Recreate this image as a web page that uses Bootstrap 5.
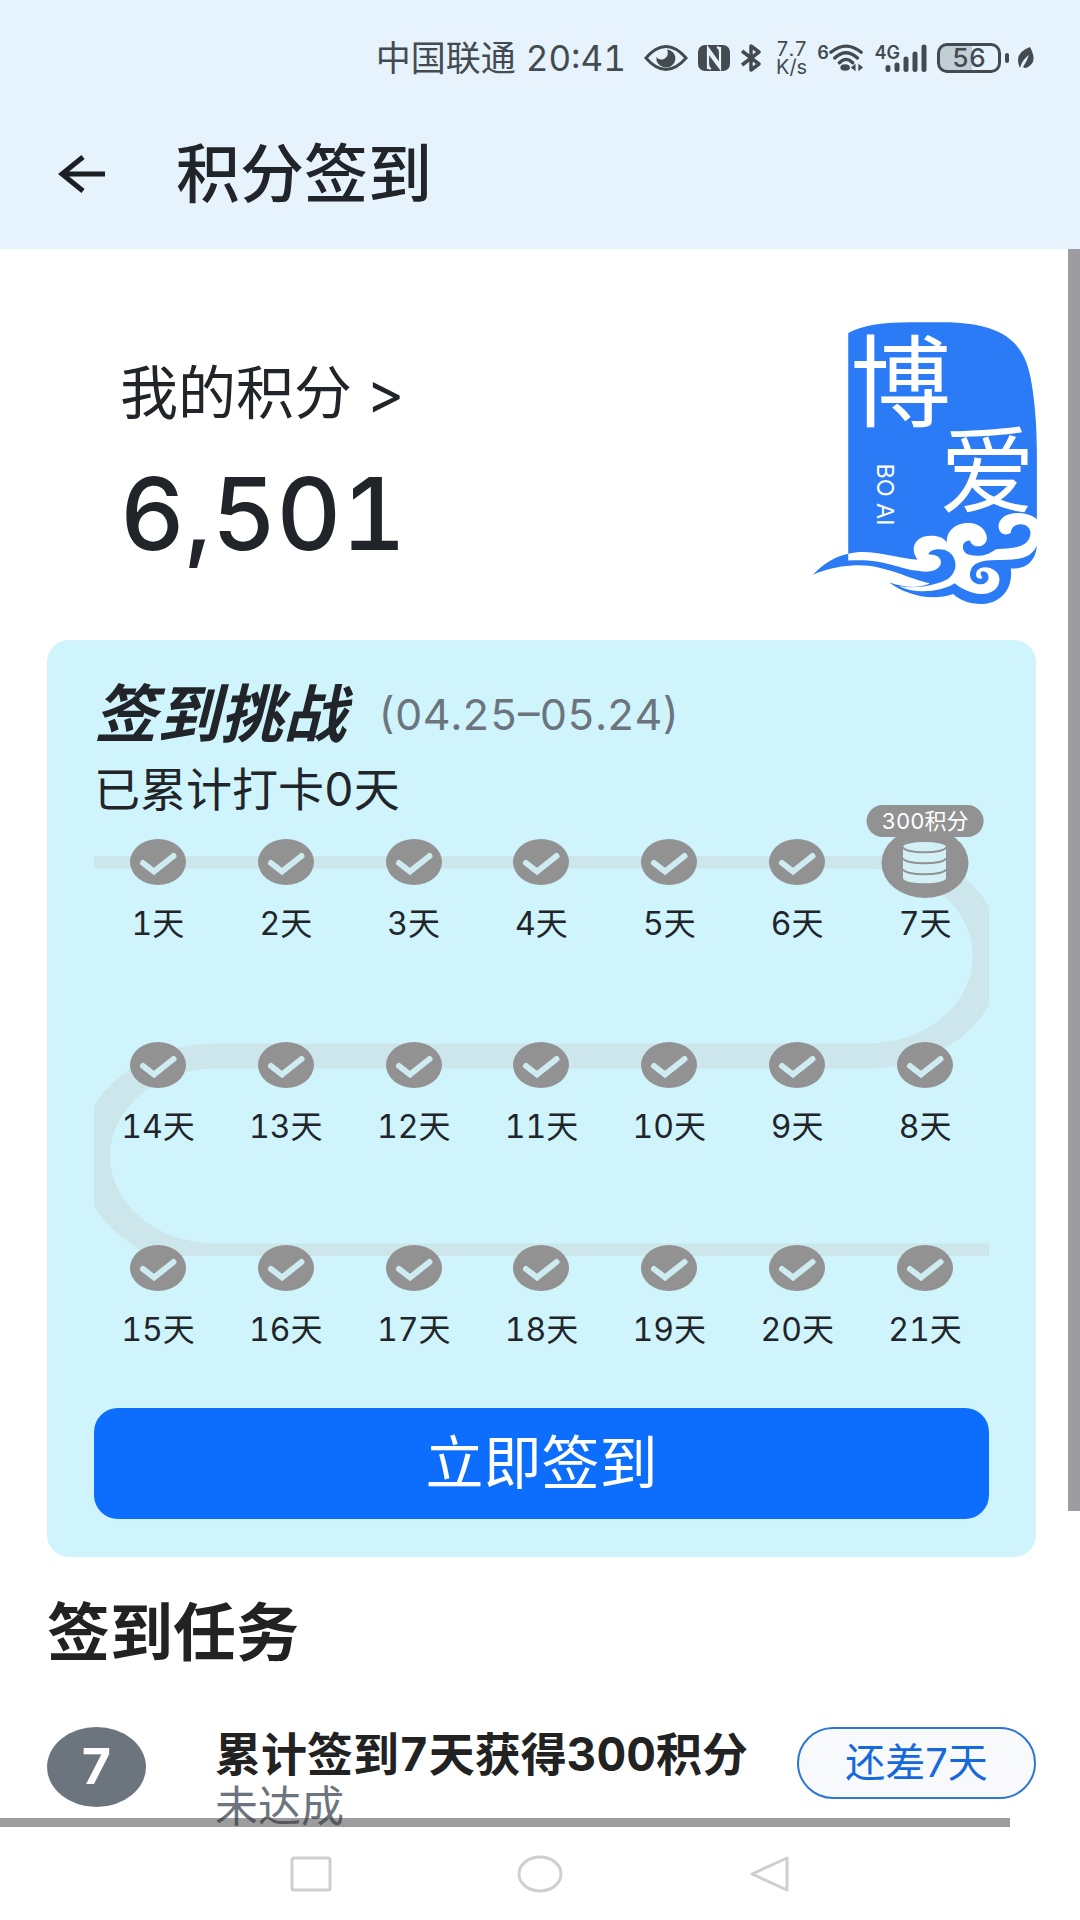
<!DOCTYPE html>
<html lang="zh-CN">
<head>
<meta charset="utf-8">
<meta name="viewport" content="width=device-width, initial-scale=1">
<title>积分签到</title>
<link href="https://cdn.jsdelivr.net/npm/bootstrap@5.3.0/dist/css/bootstrap.min.css" rel="stylesheet">
<style>
  body { font-family: Inter, "Noto Sans CJK SC", sans-serif; font-variant-numeric: tabular-nums; color: #212529; background: #fff; }
  .screen { height: 100vh; }
  .app-head { background: #e6f3fc; height: 249px; padding-top: 34px; }
  .status { color: #434b50; height: 48px; padding-right: 45px; gap: 10px; font-size: 35px; line-height: 48px; }
  .status svg, .title-bar svg, .sys-nav svg, .seal, .day svg { display: block; flex: none; }
  .net-rate { font-size: 20px; line-height: 24px; }
  .net-rate span { display: block; height: 18px; line-height: 18px; }
  .tiny-mark { font-size: 18px; line-height: 20px; font-weight: 600; align-self: flex-start; }
  .signal-bars { margin-left: -15px; }
  .power { width: 64px; height: 30px; border: 3px solid #434b50; border-radius: 10px; font-size: 26px; line-height: 24px; font-weight: 500; background: linear-gradient(90deg, #c2ced5 56%, transparent 56%); }
  .title-bar { height: 100px; margin-top: 42px; padding-left: 58px; gap: 70px; }
  .title-bar h1 { font-size: 64px; line-height: 100px; font-weight: 500; margin: 0; }
  .view { min-height: 0; }
  .scroller { height: 100%; overflow: hidden; padding: 71px 44px 0 47px; }
  .bar-v { position: absolute; right: 0; top: 0; width: 12px; height: 80%; background: #9d9ca0; }
  .bar-h { position: absolute; left: 0; bottom: 0; height: 9px; width: 1010px; max-width: 94%; background: rgba(60, 60, 60, .5); }
  .points { height: 285px; padding: 37px 0 0 73px; }
  .points a { font-size: 58px; line-height: 72px; }
  .total { font-size: 100px; line-height: 120px; margin-top: 25px; font-weight: 500; }
  .seal { width: 226px; height: 284px; margin-right: -2px; overflow: visible; }
  .panel { background: #cff4fc; border-radius: 22px; margin-top: 35px; padding: 38px 47px 38px; }
  .panel h2 { font-size: 63px; line-height: 72px; font-weight: 700; font-style: italic; margin: 0; }
  .period { font-size: 43px; line-height: 72px; color: #6c757d; }
  .accrued { font-size: 46px; line-height: 60px; margin: 9px 0 20px; }
  .days { position: relative; display: grid; grid-template-columns: repeat(7, 1fr); row-gap: 94px; list-style: none; padding: 0; margin: 0 0 54px; }
  .track { position: absolute; left: 0; top: 17px; width: 100%; height: 400px; overflow: hidden; }
  .day { position: relative; display: flex; flex-direction: column; align-items: center; gap: 15px; font-size: 32px; line-height: 48px; }
  .coin { margin: -11px 0 -13px; }
  .reward { position: absolute; top: -34px; left: 50%; transform: translateX(-50%); background: #929293; color: #fff; border-radius: 16px; font-size: 22px; line-height: 32px; padding: 0 15px; white-space: nowrap; }
  .sign { font-size: 58px; line-height: 111px; border: 0; border-radius: 24px; padding: 0; }
  .tasks { font-size: 63px; line-height: 80px; font-weight: 700; margin: 35px 0 55px; color: #222; }
  .task-no { width: 99px; height: 80px; border-radius: 50%; background: #6c757d; color: #fff; font-size: 50px; font-weight: 700; line-height: 78px; text-align: center; flex: none; }
  .task-text { margin-left: 69px; white-space: nowrap; }
  .task-text h3 { font-size: 46px; line-height: 54px; font-weight: 700; margin: 0; color: #222; }
  .task-text p { font-size: 43px; line-height: 50px; margin: 0; color: #6c757d; }
  .left-btn { width: 239px; height: 72px; font-size: 40px; line-height: 66px; padding: 0; border: 2px solid #2c76d4; border-radius: 36px; color: #1668dc; background: #f8f9fa; }
  .sys-nav { height: 93px; gap: 185px; }
  .sys-nav button { border: 0; background: none; padding: 0; }
</style>
</head>
<body>
<svg width="0" height="0" class="position-absolute" aria-hidden="true">
  <symbol id="tick" viewBox="0 0 56 46"><ellipse cx="28" cy="23" rx="28" ry="23" fill="#929292"/><path d="M13 24L24 32.500L43.500 17" fill="none" stroke="#cdebf1" stroke-width="6" stroke-linecap="round"/></symbol>
</svg>
<div class="screen d-flex flex-column">
  <header class="app-head flex-shrink-0">
    <div class="status d-flex justify-content-end align-items-center">
      <span>中国联通</span><span>20:41</span>
      <svg class="ms-2" width="44" height="28" viewBox="0 0 46 28"><path d="M2 14Q23-10 44 14Q23 38 2 14Z" fill="none" stroke="#434b50" stroke-width="3"/><path d="M24 5A10 9.500 0 1 1 13 13Q16 17 21 15Q27 11 24 5Z" fill="#434b50"/></svg>
      <svg width="32" height="26" viewBox="0 0 32 26"><rect width="32" height="26" rx="7" fill="#434b50"/><path d="M10 24V3L22 20V7Q22 3 19 2M22 2V23L10 7V19Q10 23 13 24" fill="none" stroke="#e6f3fc" stroke-width="2.200"/></svg>
      <svg width="22" height="28" viewBox="0 0 22 28"><path d="M2 7L19 20L11 26V2L19 8L2 21" fill="none" stroke="#434b50" stroke-width="3.500" stroke-linejoin="round"/></svg>
      <span class="net-rate text-center ms-1"><span>7.7</span><span>K/s</span></span>
      <span class="d-flex align-items-center"><span class="tiny-mark">6</span>
      <svg width="36" height="30" viewBox="0 0 38 30"><g fill="none" stroke="#434b50" stroke-width="3.500" stroke-linecap="round"><path d="M2 9Q18-4 34 9M6 15Q18 4 30 15M11 20Q18 13 25 20"/></g><ellipse cx="17" cy="25" rx="5" ry="3.500" fill="#434b50"/><path d="M23 25L28 21V29ZM36 25L31 21V29Z" fill="#434b50"/></svg></span>
      <span class="d-flex align-items-center"><span class="tiny-mark">4G</span>
      <svg class="signal-bars" width="42" height="30" viewBox="0 0 42 30"><path d="M3 24.500V26.500M12 22V26.500M21 16V26.500M30 11V26.500M39 4V26.500" stroke="#434b50" stroke-width="5" stroke-linecap="round"/></svg></span>
      <span class="d-flex align-items-center gap-1"><span class="power text-center">56</span>
      <svg width="4" height="10" viewBox="0 0 4 10"><rect width="4" height="10" rx="2" fill="#434b50"/></svg>
      <svg width="22" height="24" viewBox="-4 0 22 24"><path d="M13 1Q21 16 11 21Q8 23 6 21Q10 15 12 9Q5 14 3 22Q-4 7 13 1Z" fill="#434b50"/></svg></span>
    </div>
    <div class="title-bar d-flex align-items-center">
      <a href="#" aria-label="返回"><svg width="48" height="40" viewBox="0 0 48 40"><path d="M47 20H4M25 3L4 20L25 37" fill="none" stroke="#1b1e22" stroke-width="5"/></svg></a>
      <h1>积分签到</h1>
    </div>
  </header>

  <main class="view position-relative flex-grow-1">
    <div class="scroller">
      <section class="d-flex justify-content-between">
        <div class="points">
          <a href="#" class="d-block text-reset text-decoration-none">我的积分 &gt;</a>
          <div class="total">6,501</div>
        </div>
        <svg class="seal" viewBox="40 63 675 849" role="img" aria-label="博爱">
          <path fill="#2c7bf6" d="M148 762V102C190 78 260 70 330 70H430C610 70 672 130 692 230C706 300 712 380 712 470V740C706 790 675 808 634 806C642 870 600 912 545 912C510 912 480 900 462 882C395 905 320 885 270 847C330 868 370 862 392 850C330 838 250 790 160 797C115 800 80 808 42 825C75 790 110 770 148 762Z"/>
          <path fill="#fff" d="M148 762C210 745 280 772 355 780C330 745 348 708 395 708C420 708 435 716 443 728C440 690 475 666 515 670C560 675 578 725 547 738C526 744 515 733 512 722C484 722 484 758 510 765C545 774 570 762 590 748C640 745 690 745 693 700C692 665 635 665 634 700C610 712 594 695 598 672C606 645 640 636 668 641Q700 646 716 662V728C700 775 660 778 624 780C580 782 540 778 520 800C500 830 520 856 548 853C576 848 572 812 548 814C540 818 545 828 550 834C535 842 524 828 534 812C552 792 596 805 600 835C602 870 570 884 542 882C510 880 480 862 466 850C420 880 340 880 300 858C350 868 410 858 448 836C480 810 474 764 436 750C410 745 390 752 388 764C412 762 430 775 424 794C414 818 380 818 350 812C300 806 250 775 148 782Z"/>
          <g fill="#fff" font-family="Noto Sans CJK SC, sans-serif">
            <text x="155" y="360" font-size="300" font-weight="400">博</text>
            <text x="422" y="618" font-size="284" font-weight="400">爱</text>
            <text font-family="Inter, sans-serif" font-size="70" transform="translate(233 492) rotate(90)">BO AI</text>
          </g>
        </svg>
      </section>

      <section class="panel">
        <div class="d-flex align-items-center gap-4"><h2>签到挑战</h2><span class="period ms-2">(04.25–05.24)</span></div>
        <p class="accrued">已累计打卡0天</p>
        <ol class="days">
          <svg class="track" viewBox="0 0 746 400" preserveAspectRatio="none" aria-hidden="true"><path d="M0 0H645A100 100 0 0 1 645 200H101A100 100 0 0 0 101 400H746" fill="none" stroke="#cce6ec" stroke-width="25"/></svg>
          <li class="day"><svg width="56" height="46"><use href="#tick"/></svg>1天</li>
          <li class="day"><svg width="56" height="46"><use href="#tick"/></svg>2天</li>
          <li class="day"><svg width="56" height="46"><use href="#tick"/></svg>3天</li>
          <li class="day"><svg width="56" height="46"><use href="#tick"/></svg>4天</li>
          <li class="day"><svg width="56" height="46"><use href="#tick"/></svg>5天</li>
          <li class="day"><svg width="56" height="46"><use href="#tick"/></svg>6天</li>
          <li class="day"><svg class="coin" width="88" height="70" viewBox="0 0 88 70"><ellipse cx="44" cy="35" rx="43.500" ry="35" fill="#929293"/><path d="M22 19V50C22 57 65 57 65 50V19Z" fill="#d3f0f6"/><ellipse cx="43.500" cy="19" rx="21.500" ry="5" fill="#d3f0f6"/><path d="M22 19C22 26 65 26 65 19M22 30C22 37 65 37 65 30M22 41C22 48 65 48 65 41" fill="none" stroke="#929293" stroke-width="2"/></svg><span class="reward">300积分</span>7天</li>
          <li class="day"><svg width="56" height="46"><use href="#tick"/></svg>14天</li>
          <li class="day"><svg width="56" height="46"><use href="#tick"/></svg>13天</li>
          <li class="day"><svg width="56" height="46"><use href="#tick"/></svg>12天</li>
          <li class="day"><svg width="56" height="46"><use href="#tick"/></svg>11天</li>
          <li class="day"><svg width="56" height="46"><use href="#tick"/></svg>10天</li>
          <li class="day"><svg width="56" height="46"><use href="#tick"/></svg>9天</li>
          <li class="day"><svg width="56" height="46"><use href="#tick"/></svg>8天</li>
          <li class="day"><svg width="56" height="46"><use href="#tick"/></svg>15天</li>
          <li class="day"><svg width="56" height="46"><use href="#tick"/></svg>16天</li>
          <li class="day"><svg width="56" height="46"><use href="#tick"/></svg>17天</li>
          <li class="day"><svg width="56" height="46"><use href="#tick"/></svg>18天</li>
          <li class="day"><svg width="56" height="46"><use href="#tick"/></svg>19天</li>
          <li class="day"><svg width="56" height="46"><use href="#tick"/></svg>20天</li>
          <li class="day"><svg width="56" height="46"><use href="#tick"/></svg>21天</li>
        </ol>
        <button type="button" class="btn btn-primary sign d-block w-100">立即签到</button>
      </section>

      <h2 class="tasks">签到任务</h2>
      <div class="d-flex align-items-start">
        <div class="task-no">7</div>
        <div class="task-text"><h3>累计签到7天获得300积分</h3><p>未达成</p></div>
        <button type="button" class="btn left-btn ms-auto flex-shrink-0">还差7天</button>
      </div>
    </div>
    <div class="bar-v"></div>
    <div class="bar-h"></div>
  </main>

  <nav class="sys-nav d-flex justify-content-center align-items-center flex-shrink-0" aria-label="系统导航">
    <button type="button" aria-label="最近任务"><svg width="42" height="36" viewBox="0 0 42 36"><rect x="2" y="2" width="38" height="32" rx="2" fill="none" stroke="#cfcfcf" stroke-width="3"/></svg></button>
    <button type="button" aria-label="主页"><svg width="46" height="38" viewBox="0 0 46 38"><ellipse cx="23" cy="19" rx="21" ry="17" fill="none" stroke="#cfcfcf" stroke-width="3"/></svg></button>
    <button type="button" aria-label="返回上级"><svg width="42" height="38" viewBox="0 0 42 38"><path d="M39 3V35L4 19Z" fill="none" stroke="#cfcfcf" stroke-width="3" stroke-linejoin="round"/></svg></button>
  </nav>
</div>
<script src="https://cdn.jsdelivr.net/npm/bootstrap@5.3.0/dist/js/bootstrap.bundle.min.js"></script>
</body>
</html>
